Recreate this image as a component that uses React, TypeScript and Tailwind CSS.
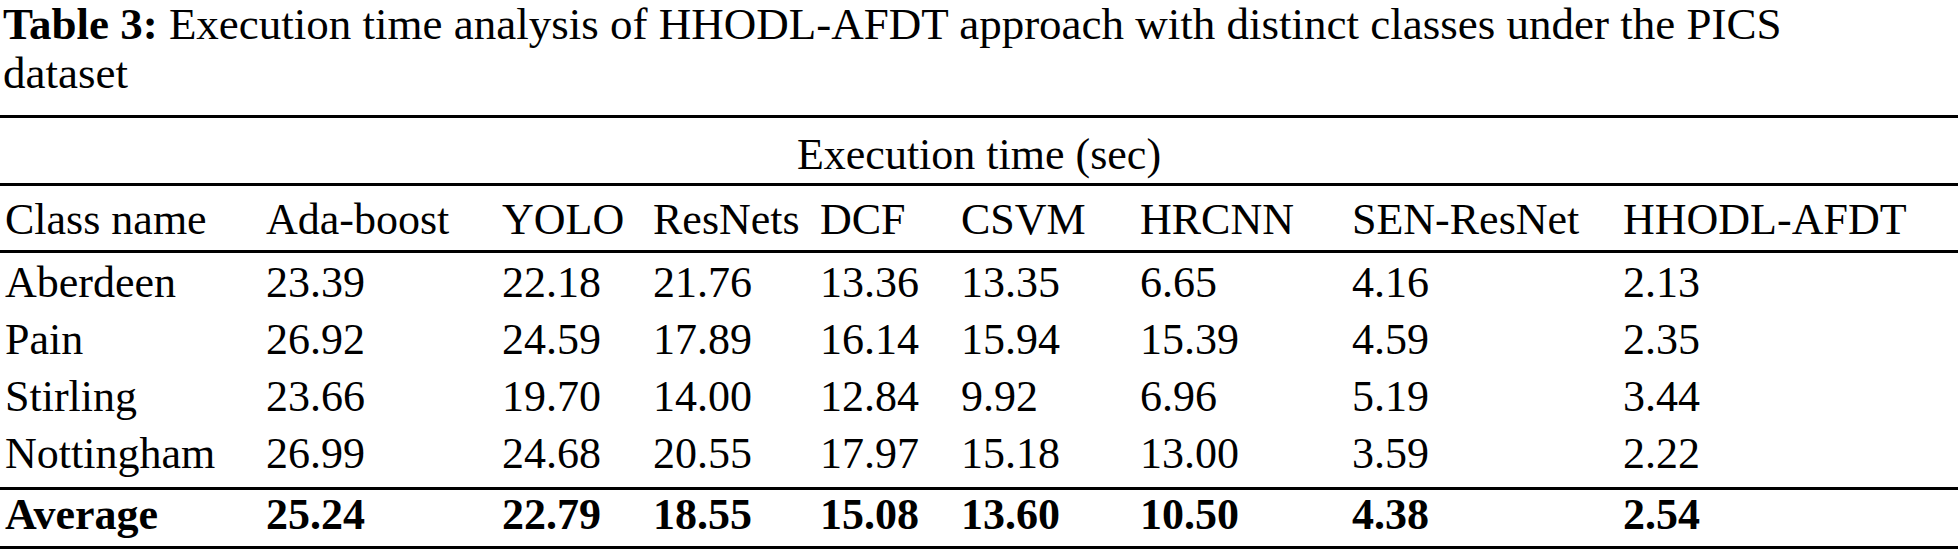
const columns = [
  "Class name",
  "Ada-boost",
  "YOLO",
  "ResNets",
  "DCF",
  "CSVM",
  "HRCNN",
  "SEN-ResNet",
  "HHODL-AFDT",
];

const rows = [
  ["Aberdeen", "23.39", "22.18", "21.76", "13.36", "13.35", "6.65", "4.16", "2.13"],
  ["Pain", "26.92", "24.59", "17.89", "16.14", "15.94", "15.39", "4.59", "2.35"],
  ["Stirling", "23.66", "19.70", "14.00", "12.84", "9.92", "6.96", "5.19", "3.44"],
  ["Nottingham", "26.99", "24.68", "20.55", "17.97", "15.18", "13.00", "3.59", "2.22"],
];

const average = ["Average", "25.24", "22.79", "18.55", "15.08", "13.60", "10.50", "4.38", "2.54"];

// column starts measured off the reference
const grid =
  "grid grid-cols-[261px_236px_151px_167px_141px_179px_212px_271px_1fr] pl-[5px]";

function Cells({ cells }: { cells: string[] }) {
  return (
    <>
      {cells.map((c, i) => (
        <div key={i} className="whitespace-nowrap">
          {c}
        </div>
      ))}
    </>
  );
}

export default function App() {
  return (
    <div className="w-[1958px] h-[554px] bg-white text-black font-['Liberation_Serif',serif] text-[44px] leading-[56px] overflow-hidden">
      <div className="max-w-[1860px] pl-[3px] text-[45px] leading-[49px]">
        <span className="font-bold">Table 3:</span> Execution time analysis of HHODL-AFDT
        approach with distinct classes under the PICS dataset
      </div>
      <div className="mt-[17px] border-t-[3px] border-black" />
      <div className="h-[65px] pt-[9px] text-center">Execution time (sec)</div>
      <div className="border-t-[3px] border-black" />
      <div className={`${grid} h-[64px] pt-[6px]`}>
        <Cells cells={columns} />
      </div>
      <div className="border-t-[3px] border-black" />
      {rows.map((r) => (
        <div key={r[0]} className={`${grid} h-[57px] pt-[2px]`}>
          <Cells cells={r} />
        </div>
      ))}
      <div className="mt-[6px] border-t-[3px] border-black" />
      <div className={`${grid} h-[56px] leading-[50px] font-bold`}>
        <Cells cells={average} />
      </div>
      <div className="border-t-[3px] border-black" />
    </div>
  );
}
